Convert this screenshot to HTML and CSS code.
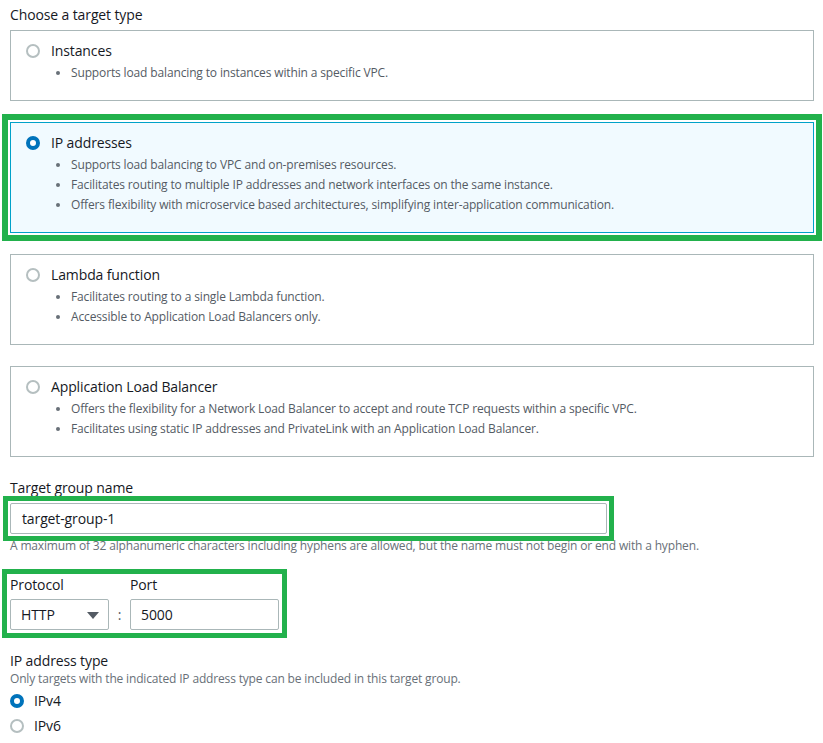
FILE: index.html
```html
<!DOCTYPE html>
<html lang="en">
<head>
    <meta charset="UTF-8">
    <meta name="viewport" content="width=device-width, initial-scale=1.0">
    <title>Target group - Basic configuration</title>
    <link rel="stylesheet" href="styles.css">
</head>
<body>
    <div class="page">
        <!-- Target type -->
        <div class="field-label">Choose a target type</div>
        <div class="tiles">
            <div class="tile">
                <div class="tile-head"><span class="radio"></span>Instances</div>
                <ul class="tile-list">
                    <li>Supports load balancing to instances within a specific VPC.</li>
                </ul>
            </div>

            <div class="tile selected marked">
                <div class="tile-head"><span class="radio checked"></span>IP addresses</div>
                <ul class="tile-list">
                    <li>Supports load balancing to VPC and on-premises resources.</li>
                    <li>Facilitates routing to multiple IP addresses and network interfaces on the same instance.</li>
                    <li>Offers flexibility with microservice based architectures, simplifying inter-application communication.</li>
                </ul>
            </div>

            <div class="tile">
                <div class="tile-head"><span class="radio"></span>Lambda function</div>
                <ul class="tile-list">
                    <li>Facilitates routing to a single Lambda function.</li>
                    <li>Accessible to Application Load Balancers only.</li>
                </ul>
            </div>

            <div class="tile">
                <div class="tile-head"><span class="radio"></span>Application Load Balancer</div>
                <ul class="tile-list">
                    <li>Offers the flexibility for a Network Load Balancer to accept and route TCP requests within a specific VPC.</li>
                    <li>Facilitates using static IP addresses and PrivateLink with an Application Load Balancer.</li>
                </ul>
            </div>
        </div>

        <!-- Target group name -->
        <div class="field-label">Target group name</div>
        <div class="name-box marked">
            <div class="text-input">target-group-1</div>
        </div>
        <div class="help">A maximum of 32 alphanumeric characters including hyphens are allowed, but the name must not begin or end with a hyphen.</div>

        <!-- Protocol / Port -->
        <div class="proto-port marked">
            <div class="proto-col">
                <div class="small-label">Protocol</div>
                <div class="select">HTTP<span class="caret"></span></div>
            </div>
            <div class="colon">:</div>
            <div class="port-col">
                <div class="small-label">Port</div>
                <div class="text-input port-input">5000</div>
            </div>
        </div>

        <!-- IP address type -->
        <div class="field-label ip-type">IP address type</div>
        <div class="help flush">Only targets with the indicated IP address type can be included in this target group.</div>
        <div class="radio-group">
            <div class="radio-row"><span class="radio checked"></span>IPv4</div>
            <div class="radio-row"><span class="radio"></span>IPv6</div>
        </div>
    </div>
</body>
</html>
```

FILE: styles.css
```css
/* Global Styles */
* {
    margin: 0;
    padding: 0;
    box-sizing: border-box;
}

body {
    font-family: 'Open Sans', 'Noto Sans', sans-serif;
    color: #16191f;
    background: #ffffff;
    font-size: 14px;
    letter-spacing: -0.12px;
}

.page {
    padding: 5px 9px 0 10px;
}

.field-label {
    font-size: 14px;
    line-height: 20px;
    margin-bottom: 5px;
}

/* Tiles */
.tiles {
    display: flex;
    flex-direction: column;
    gap: 21px;
    margin-bottom: 21px;
}

.tile {
    border: 1px solid #aab7b8;
    padding: 10px 20px 17px 15px;
    background: #ffffff;
}

.tile.selected {
    border-color: #00a1c9;
    background: #f1faff;
}

.tile-head {
    display: flex;
    align-items: center;
    line-height: 20px;
    font-size: 14px;
}

.tile-list {
    list-style: none;
    margin: 2px 0 0 30px;
}

.tile-list li {
    position: relative;
    padding-left: 15px;
    font-size: 12px;
    line-height: 20px;
    color: #545b64;
    letter-spacing: -0.14px;
}

.tile-list li::before {
    content: "";
    position: absolute;
    left: 0;
    top: 8px;
    width: 4px;
    height: 4px;
    border-radius: 50%;
    background: #687078;
}

/* Radios */
.radio {
    display: inline-block;
    width: 14px;
    height: 14px;
    border-radius: 50%;
    border: 2px solid #b5bfc0;
    background: #ffffff;
    margin-right: 11px;
    flex-shrink: 0;
}

.radio.checked {
    border: 4px solid #0073bb;
}

/* Annotation boxes */
.marked {
    outline: 6px solid #22b14c;
    outline-offset: 2px;
}

/* Inputs */
.text-input {
    height: 31px;
    border: 1px solid #aab7b8;
    border-radius: 2px;
    line-height: 29px;
    font-size: 14px;
    padding: 0 11px;
    background: #ffffff;
}

.name-box {
    width: 597px;
    outline-width: 5px;
}

.help {
    font-size: 12px;
    line-height: 16px;
    color: #687078;
    margin-top: 4px;
    letter-spacing: -0.16px;
}

.help.flush {
    margin-top: 0;
}

.proto-port {
    display: inline-flex;
    align-items: flex-end;
    margin-top: 23px;
    outline-width: 5px;
    outline-offset: 3px;
}

.small-label {
    font-size: 14px;
    line-height: 16px;
    margin-bottom: 6px;
}

.select {
    position: relative;
    width: 99px;
    height: 31px;
    border: 1px solid #aab7b8;
    border-radius: 2px;
    line-height: 29px;
    padding: 0 10px;
    font-size: 14px;
}

.caret {
    position: absolute;
    right: 9px;
    top: 12px;
    width: 0;
    height: 0;
    border-left: 6px solid transparent;
    border-right: 6px solid transparent;
    border-top: 7px solid #545b64;
}

.colon {
    width: 21px;
    text-align: center;
    line-height: 31px;
    color: #545b64;
}

.port-input {
    width: 149px;
    padding: 0 10px;
}

.ip-type {
    margin-top: 21px;
    margin-bottom: 0;
}

.radio-group {
    display: flex;
    flex-direction: column;
    gap: 5px;
    margin-top: 4px;
}

.radio-row {
    display: flex;
    align-items: center;
    line-height: 20px;
    font-size: 14px;
}

.radio-row .radio {
    margin-right: 10px;
}
```
